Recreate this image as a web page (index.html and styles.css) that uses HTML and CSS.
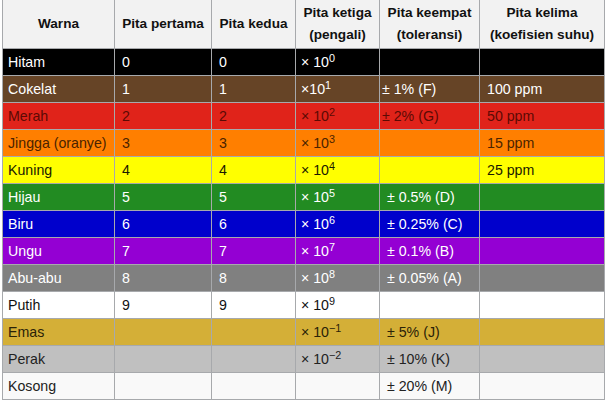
FILE: index.html
```html
<!DOCTYPE html>
<html lang="id">
<head>
<meta charset="utf-8">
<title>Kode warna resistor</title>
<link rel="stylesheet" href="styles.css">
</head>
<body>
<table class="codes">
  <colgroup>
    <col class="c1"><col class="c2"><col class="c3"><col class="c4"><col class="c5"><col class="c6">
  </colgroup>
  <thead>
    <tr>
      <th>Warna</th>
      <th>Pita pertama</th>
      <th>Pita kedua</th>
      <th>Pita ketiga<br>(pengali)</th>
      <th>Pita keempat<br>(toleransi)</th>
      <th>Pita kelima<br>(koefisien suhu)</th>
    </tr>
  </thead>
  <tbody>
    <tr class="hitam"><td>Hitam</td><td>0</td><td>0</td><td>× 10<sup>0</sup></td><td></td><td></td></tr>
    <tr class="cokelat"><td>Cokelat</td><td>1</td><td>1</td><td>×10<sup>1</sup></td><td class="tight">± 1% (F)</td><td>100 ppm</td></tr>
    <tr class="merah"><td>Merah</td><td>2</td><td>2</td><td>× 10<sup>2</sup></td><td class="tight">± 2% (G)</td><td>50 ppm</td></tr>
    <tr class="jingga"><td>Jingga (oranye)</td><td>3</td><td>3</td><td>× 10<sup>3</sup></td><td></td><td>15 ppm</td></tr>
    <tr class="kuning"><td>Kuning</td><td>4</td><td>4</td><td>× 10<sup>4</sup></td><td></td><td>25 ppm</td></tr>
    <tr class="hijau"><td>Hijau</td><td>5</td><td>5</td><td>× 10<sup>5</sup></td><td>± 0.5% (D)</td><td></td></tr>
    <tr class="biru"><td>Biru</td><td>6</td><td>6</td><td>× 10<sup>6</sup></td><td>± 0.25% (C)</td><td></td></tr>
    <tr class="ungu"><td>Ungu</td><td>7</td><td>7</td><td>× 10<sup>7</sup></td><td>± 0.1% (B)</td><td></td></tr>
    <tr class="abu"><td>Abu-abu</td><td>8</td><td>8</td><td>× 10<sup>8</sup></td><td>± 0.05% (A)</td><td></td></tr>
    <tr class="putih"><td>Putih</td><td>9</td><td>9</td><td>× 10<sup>9</sup></td><td></td><td></td></tr>
    <tr class="emas"><td>Emas</td><td></td><td></td><td>× 10<sup>−1</sup></td><td>± 5% (J)</td><td></td></tr>
    <tr class="perak"><td>Perak</td><td></td><td></td><td>× 10<sup>−2</sup></td><td>± 10% (K)</td><td></td></tr>
    <tr class="kosong"><td>Kosong</td><td></td><td></td><td></td><td>± 20% (M)</td><td></td></tr>
  </tbody>
</table>
</body>
</html>
```

FILE: styles.css
```css
html, body {
  margin: 0;
  padding: 0;
  background: #ffffff;
}

body {
  font-family: "Liberation Sans", Arial, sans-serif;
}

.codes {
  margin: -1px 0 0 2px;
  border-collapse: collapse;
  table-layout: fixed;
  width: 602px;
  font-size: 14.2px;
  color: #222;
  background: #f9f9f9;
}

.c1 { width: 112px; }
.c2 { width: 97px; }
.c3 { width: 84px; }
.c4 { width: 84px; }
.c5 { width: 100px; }
.c6 { width: 125px; }

.codes th,
.codes td {
  border: 1px solid #a7a9ac;
  white-space: nowrap;
  overflow: hidden;
}

.codes th {
  background: #f2f2f2;
  color: #111;
  font-size: 13.6px;
  font-weight: bold;
  line-height: 21.7px;
  height: 44px;
  padding: 2px 4px;
  text-align: center;
  vertical-align: middle;
}

.codes td {
  height: 22px;
  line-height: 22px;
  padding: 2px 4px 2px 7px;
  text-align: left;
  vertical-align: middle;
}

.codes td:first-child {
  padding-left: 5px;
}

.codes td:nth-child(4) {
  padding-left: 5px;
}

.codes td.tight {
  padding-left: 2px;
}

.codes sup {
  font-size: 10.8px;
  line-height: 0;
  vertical-align: 0.45em;
}

.hitam td   { background: #000000; color: #ffffff; }
.cokelat td { background: #664426; color: #ffffff; }
.merah td   { background: #e0231a; color: #5c0a04; }
.jingga td  { background: #ff7f00; color: #4a2300; }
.kuning td  { background: #ffff00; color: #1a1a00; }
.hijau td   { background: #228b22; color: #ffffff; }
.biru td    { background: #0000cc; color: #ffffff; }
.ungu td    { background: #9400d3; color: #ffffff; }
.abu td     { background: #808080; color: #ffffff; }
.putih td   { background: #ffffff; color: #111111; }
.emas td    { background: #d4af37; color: #2a2208; }
.perak td   { background: #c0c0c0; color: #222222; }
.kosong td  { background: #f9f9f9; color: #222222; }
```
